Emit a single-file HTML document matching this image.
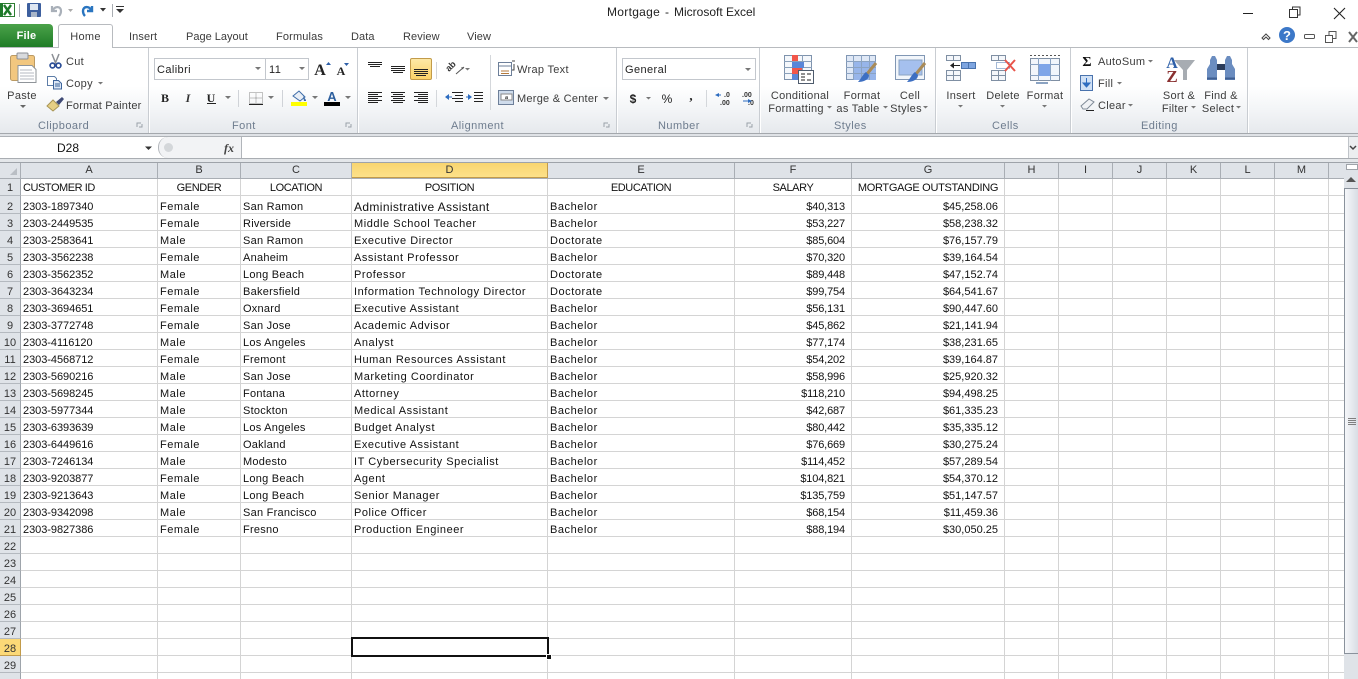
<!DOCTYPE html>
<html><head><meta charset="utf-8"><title>Mortgage - Microsoft Excel</title>
<style>
html,body{margin:0;padding:0;width:1358px;height:679px;overflow:hidden;background:#fff;font-family:"Liberation Sans",sans-serif}
#page{position:absolute;left:0;top:0;width:1358px;height:679px;overflow:hidden;background:#fff}
.a{position:absolute}
.t{position:absolute;white-space:nowrap;font-size:11px;line-height:14px;color:#3c3c3c;letter-spacing:.3px;margin-top:1px}
.c{transform:translateX(-50%)}
.g{color:#6e7c8e}
#rib{position:absolute;left:0;top:48px;width:1358px;height:85px;background:linear-gradient(#fff 0,#fff 45%,#f3f5f7 72%,#e6e9ed 100%)}
.sep{position:absolute;top:48px;height:85px;width:1px;background:#c9cdd2;box-shadow:1px 0 0 #fff}
.box{position:absolute;box-sizing:border-box;border:1px solid #c3c7cd;background:#fff}
table{position:absolute;left:0;top:179px;border-collapse:separate;border-spacing:0;table-layout:fixed;width:1005px}
td{box-sizing:border-box;height:17px;padding:4px 0 0 2px;vertical-align:top;border-right:1px solid #d4d4d4;border-bottom:1px solid #d4d4d4;font-size:11px;line-height:12px;white-space:nowrap;overflow:hidden;color:#111;letter-spacing:.55px}
td:nth-child(4){letter-spacing:.25px}
td:first-child{background:#dfe3e8;border-right:1px solid #9ea4ab;border-bottom:1px solid #b4b9bf;text-align:center;padding-left:0;color:#333;letter-spacing:0}
td.n{letter-spacing:-.05px}
td.m{text-align:right;padding-left:0;padding-right:6px;letter-spacing:-.15px}
td.o{text-align:right;padding-left:0;padding-right:6px;letter-spacing:0}
td.h{text-align:center;padding-left:0}
tr.r1 td{padding-top:3px;letter-spacing:-.4px}
tr.r1 td:first-child{letter-spacing:0}
tr.r2 td{padding-top:5px}
.hd{position:absolute;top:163px;height:15px;box-sizing:border-box;background:#dfe3e8;border-right:1px solid #a9aeb4;text-align:center;font-size:11px;line-height:15px;color:#333}
</style></head><body><div id="page">

<div id="rib"></div>
<div class="a" style="left:0;top:47px;width:1358px;height:1px;background:#b8bbbf"></div>
<div class="a" style="left:0;top:133px;width:1358px;height:1px;background:#a4a8ad"></div>
<div class="a" style="left:0;top:134px;width:1358px;height:3px;background:#dfe2e6"></div>
<div class="a" style="left:0;top:136px;width:1358px;height:1px;background:#aeb2b7"></div>
<div class="a" style="left:0;top:158px;width:1358px;height:1px;background:#a9adb2"></div>
<div class="a" style="left:0;top:159px;width:1358px;height:3px;background:#e4e7ea"></div>
<div class="a" style="left:0;top:162px;width:1358px;height:1px;background:#9ea3a9"></div>

<div class="sep" style="left:148px"></div><div class="sep" style="left:357px"></div><div class="sep" style="left:616px"></div><div class="sep" style="left:759px"></div><div class="sep" style="left:935px"></div><div class="sep" style="left:1070px"></div><div class="sep" style="left:1247px"></div>

<div class="a" style="left:0;top:24px;width:53px;height:23px;border-radius:0 4px 0 0;background:linear-gradient(#4ba24a,#1f7c27);color:#fff;font-size:11px;font-weight:bold;text-align:center;line-height:25px;letter-spacing:.2px">File</div>
<div class="a" style="left:58px;top:24px;width:55px;height:24px;box-sizing:border-box;border:1px solid #b8bbbf;border-bottom:0;border-radius:3px 3px 0 0;background:#fff;color:#3c3c3c;font-size:11px;text-align:center;line-height:24px;letter-spacing:.3px">Home</div>

<div class="t" style="left:129px;top:29px;letter-spacing:.1px">Insert</div>
<div class="t" style="left:186px;top:29px;letter-spacing:0">Page Layout</div>
<div class="t" style="left:276px;top:29px;letter-spacing:.15px">Formulas</div>
<div class="t" style="left:351px;top:29px;letter-spacing:.1px">Data</div>
<div class="t" style="left:403px;top:29px;letter-spacing:.1px">Review</div>
<div class="t" style="left:467px;top:29px;letter-spacing:.1px">View</div>
<div class="t" style="left:607px;top:4px;font-size:12px;color:#222;letter-spacing:.3px">Mortgage</div>
<div class="t" style="left:665px;top:4px;font-size:12px;color:#222">-</div>
<div class="t" style="left:674px;top:4px;font-size:12px;color:#222;letter-spacing:0">Microsoft Excel</div>

<div class="t" style="left:66px;top:54px">Cut</div>
<div class="t" style="left:66px;top:76px">Copy</div>
<div class="t" style="left:66px;top:98px;letter-spacing:.2px">Format Painter</div>
<div class="t c" style="left:22px;top:88px">Paste</div>
<div class="t g" style="left:38px;top:118px;letter-spacing:.45px">Clipboard</div>
<div class="t g" style="left:232px;top:118px;letter-spacing:.45px">Font</div>
<div class="t g" style="left:451px;top:118px;letter-spacing:.45px">Alignment</div>
<div class="t g" style="left:658px;top:118px;letter-spacing:.45px">Number</div>
<div class="t g" style="left:834px;top:118px;letter-spacing:.45px">Styles</div>
<div class="t g" style="left:992px;top:118px;letter-spacing:.45px">Cells</div>
<div class="t g" style="left:1141px;top:118px;letter-spacing:.45px">Editing</div>

<div class="box" style="left:154px;top:58px;width:112px;height:22px"></div>
<div class="box" style="left:265px;top:58px;width:44px;height:22px"></div>
<div class="t" style="left:157px;top:62px;color:#222;letter-spacing:.4px">Calibri</div>
<div class="t" style="left:269px;top:62px;color:#222;letter-spacing:.4px">11</div>

<div class="a" style="left:410px;top:58px;width:22px;height:22px;box-sizing:border-box;border:1px solid #c29b4a;border-radius:2px;background:linear-gradient(#fde9a6,#fbd268)"></div>
<div class="t" style="left:517px;top:62px;letter-spacing:.3px">Wrap Text</div>
<div class="t" style="left:517px;top:91px;letter-spacing:.25px">Merge &amp; Center</div>
<div class="box" style="left:622px;top:58px;width:134px;height:22px"></div>
<div class="t" style="left:625px;top:62px;color:#222;letter-spacing:.4px">General</div>

<div class="t c" style="left:800px;top:88px">Conditional</div>
<div class="t c" style="left:796px;top:101px">Formatting</div>
<div class="t c" style="left:862px;top:88px">Format</div>
<div class="t c" style="left:858px;top:101px">as Table</div>
<div class="t c" style="left:910px;top:88px">Cell</div>
<div class="t c" style="left:906px;top:101px">Styles</div>
<div class="t c" style="left:961px;top:88px">Insert</div>
<div class="t c" style="left:1003px;top:88px">Delete</div>
<div class="t c" style="left:1045px;top:88px">Format</div>
<div class="t" style="left:1098px;top:54px">AutoSum</div>
<div class="t" style="left:1098px;top:76px">Fill</div>
<div class="t" style="left:1098px;top:98px">Clear</div>
<div class="t c" style="left:1179px;top:88px">Sort &amp;</div>
<div class="t c" style="left:1175px;top:101px">Filter</div>
<div class="t c" style="left:1221px;top:88px">Find &amp;</div>
<div class="t c" style="left:1218px;top:101px">Select</div>

<div class="t" style="left:57px;top:140px;font-size:12px;color:#111;letter-spacing:0">D28</div>
<div class="a" style="left:158px;top:137px;width:84px;height:21px;box-sizing:border-box;border:1px solid #b1b5ba;border-width:0 1px 0 1px;border-radius:10px 0 0 10px;background:#f2f3f5"></div>
<div class="a" style="left:164px;top:143px;width:9px;height:9px;border-radius:50%;background:#d4d7da"></div>
<div class="t" style="left:224px;top:140px;font-family:'Liberation Serif',serif;font-style:italic;font-weight:bold;font-size:12px;color:#444;letter-spacing:0">fx</div>
<div class="a" style="left:1348px;top:137px;width:10px;height:21px;background:#eceef0;border-left:1px solid #c0c4c9"></div>

<svg class="a" style="left:0;top:0" width="1358" height="136" viewBox="0 0 1358 136">
<!-- QAT -->
<rect x="0.5" y="3.5" width="14" height="13" fill="#fff" stroke="#2d7d32"/><path d="M4 5l7 10M11 5l-7 10" stroke="#1f7a2a" stroke-width="2.400"/><rect x="0" y="3" width="3" height="14" fill="#1f7a2a"/>
<path d="M19.500 4v13M112.500 4v13" stroke="#a9adb2"/>
<rect x="27" y="3" width="14" height="14" rx="1" fill="#3d5f9e"/><rect x="30" y="4" width="8" height="6" fill="#dfe7f2"/><rect x="31" y="12" width="6" height="5" fill="#a8b5c8"/>
<path d="M52 6v5h5M53 10c2-4 8-4 8 1 0 2-1 4-2 5" fill="none" stroke="#a9b0b9" stroke-width="2.200"/>
<path d="M68 9h5l-2.500 3z" fill="#aaa"/>
<path d="M92 6v5h-5M91 10c-2-4-8-4-8 1 0 2 1 4 2 5" fill="none" stroke="#2a75c0" stroke-width="2.400"/>
<path d="M100 8h6l-3 3.500z" fill="#333"/>
<path d="M116 6h8v1h-8zM116 9h8l-4 4z" fill="#333"/>
<!-- window -->
<path d="M1243 13.500h10" stroke="#222"/><path d="M1289.500 9.500h8v8h-8zM1292.500 9.500v-2.500h7.500v8h-2.500" fill="#fff" stroke="#333"/><path d="M1334 8l11 11M1345 8l-11 11" stroke="#222" stroke-width="1.100"/>
<path d="M1262 38l4-4 4 4-1.500 1.500-2.500-2.500-2.500 2.500z" fill="#fff" stroke="#444"/>
<circle cx="1287" cy="35" r="8" fill="#3c78c8"/><text x="1287" y="40" font-family="Liberation Sans" font-size="13" font-weight="bold" fill="#fff" text-anchor="middle">?</text>
<rect x="1304.500" y="34.500" width="10" height="4" rx="1" fill="#fff" stroke="#555"/>
<path d="M1325.500 35.500h7v7h-7zM1329 35v-3.500h7v7h-3" fill="#fff" stroke="#555"/>
<path d="M1349 32l8 10M1357 32l-8 10" stroke="#666" stroke-width="2"/>
<!-- paste -->
<rect x="10.500" y="55.500" width="24" height="25" rx="2" fill="#f2c77f" stroke="#bb9a63"/><rect x="17" y="53" width="11" height="6" rx="1" fill="#d8dadd" stroke="#8b8f95"/>
<path d="M18 65.500h14l4 4v13h-18z" fill="#fff" stroke="#8f9499"/><path d="M20 70h12M20 73h14M20 76h14M20 79h14" stroke="#b4bac2"/>
<path d="M20 105h6l-3 3z" fill="#666"/>
<!-- cut / copy / painter -->
<path d="M52 54l4 10M59 54l-4 10" stroke="#8b8f95" stroke-width="1.500"/><circle cx="52.500" cy="65.500" r="2.400" fill="none" stroke="#2d4f97" stroke-width="1.700"/><circle cx="58.500" cy="65.500" r="2.400" fill="none" stroke="#2d4f97" stroke-width="1.700"/>
<path d="M47.500 76.500h7l2 2v7h-9z" fill="#fff" stroke="#5e7ea8"/><path d="M53.500 80.500h5l3 3v5.500h-8z" fill="#dbe6f5" stroke="#3e659b"/><path d="M55 84h5M55 86h5" stroke="#3e659b"/>
<path d="M98 82h5l-2.500 2.500z" fill="#777"/>
<path d="M47 106l6-6 6 6-6 5z" fill="#e6cf84" stroke="#a89555"/><path d="M56 102l6-5 2 2-5 6z" fill="#3f4a75"/>
<!-- font -->
<path d="M255 67h6l-3 3zM299 67h6l-3 3z" fill="#777"/>
<text x="320" y="75" font-family="Liberation Serif" font-size="16" font-weight="bold" fill="#222" text-anchor="middle">A</text><path d="M326 65h5l-2.500-3z" fill="#2d5fa8"/>
<text x="341" y="75" font-family="Liberation Serif" font-size="12" font-weight="bold" fill="#222" text-anchor="middle">A</text><path d="M344 63h5l-2.500 3z" fill="#2d5fa8"/>
<text x="165" y="102" font-family="Liberation Serif" font-size="12" font-weight="bold" fill="#222" text-anchor="middle">B</text>
<text x="188" y="102" font-family="Liberation Serif" font-size="12" font-style="italic" font-weight="bold" fill="#333" text-anchor="middle">I</text>
<text x="211" y="102" font-family="Liberation Serif" font-size="12" font-weight="bold" fill="#222" text-anchor="middle">U</text><path d="M207 103.500h9" stroke="#222"/>
<path d="M225 96h6l-3 3zM268 96h6l-3 3zM312 96h6l-3 3zM345 96h6l-3 3z" fill="#777"/>
<path d="M238.500 90v17" stroke="#d0d3d8"/><path d="M282.500 90v17" stroke="#d0d3d8"/>
<path d="M249.500 92.500h13v11h-13zM256 92.500v11M249.500 98h13" fill="none" stroke="#888" stroke-dasharray="1 1"/><path d="M249 104.500h14" stroke="#222"/>
<path d="M293 96l6-5 6 6-5 4z" fill="#e8eef6" stroke="#3d6ca8"/><path d="M303 96l3 4v1h-2z" fill="#3d6ca8"/><rect x="291" y="102" width="16" height="4" fill="#ffff00"/>
<text x="332" y="101" font-family="Liberation Sans" font-size="13" font-weight="bold" fill="#2d5f9e" text-anchor="middle">A</text><rect x="324" y="102" width="16" height="4" fill="#000"/>
<!-- alignment -->
<g stroke="#222">
<path d="M368 62.500h14M368 64.500h14M370 66.500h10"/>
<path d="M391 66.500h14M391 68.500h14M391 70.500h14M393 72.500h10"/>
<path d="M414 69.500h14M414 71.500h14M414 73.500h14M416 75.500h10"/>
<path d="M368 92.500h14M368 94.500h10M368 96.500h14M368 98.500h10M368 100.500h14M368 102.500h10"/>
<path d="M391 92.500h14M393 94.500h10M391 96.500h14M393 98.500h10M391 100.500h14M393 102.500h10"/>
<path d="M414 92.500h14M418 94.500h10M414 96.500h14M418 98.500h10M414 100.500h14M418 102.500h10"/>
<path d="M452 92.500h11M455 95.500h8M452 98.500h11M455 101.500h8"/>
<path d="M474 92.500h9M474 95.500h9M474 98.500h9M474 101.500h9"/>
</g>
<text x="0" y="0" transform="translate(449 72) rotate(-45)" font-family="Liberation Sans" font-size="9" font-weight="bold" fill="#333">ab</text>
<path d="M456 74l8-7" stroke="#555"/><path d="M464 67l-3 .5 2 2z" fill="#555"/>
<path d="M445 97l4-3v6zM472 97l-4-3v6z" fill="#2d6cc0"/><path d="M449 97h3M468 97h-2" stroke="#2d6cc0"/>
<path d="M465 68h5l-2.500 2.500z" fill="#777"/>
<path d="M436.500 62v17M436.500 90v17M490.500 55v55" stroke="#d4d7db"/>
<rect x="498.500" y="62.500" width="13" height="13" fill="#fff" stroke="#6d7f99"/><path d="M499 66h12" stroke="#6d7f99"/><path d="M501 71h8M501 73.500h8" stroke="#b57a3c"/><path d="M512 61h3M514 64v6h-2" stroke="#444" fill="none"/>
<rect x="498.500" y="90.500" width="15" height="14" fill="#cfdcec" stroke="#6d7f99"/><rect x="501" y="94" width="11" height="6" fill="#fff" stroke="#888"/><text x="506.500" y="99" font-family="Liberation Serif" font-size="6" font-weight="bold" fill="#222" text-anchor="middle">a</text>
<path d="M603 97h6l-3 3zM745 68h6l-3 3zM646 97h5l-2.500 2.500z" fill="#777"/>
<!-- number -->
<text x="633" y="103" font-family="Liberation Sans" font-size="12" font-weight="bold" fill="#222" text-anchor="middle">$</text>
<text x="667" y="103" font-family="Liberation Sans" font-size="12" fill="#222" text-anchor="middle">%</text>
<text x="691" y="100" font-family="Liberation Serif" font-size="13" font-weight="bold" fill="#222" text-anchor="middle">,</text>
<path d="M706.500 90v17" stroke="#d4d7db"/>
<text x="724" y="97" font-family="Liberation Sans" font-size="7" font-weight="bold" fill="#333">.0</text><text x="720" y="105" font-family="Liberation Sans" font-size="7" font-weight="bold" fill="#333">.00</text>
<text x="742" y="97" font-family="Liberation Sans" font-size="7" font-weight="bold" fill="#333">.00</text><text x="748" y="105" font-family="Liberation Sans" font-size="7" font-weight="bold" fill="#333">.0</text>
<path d="M715 95l4-2v4zM752 101l-4-2v4z" fill="#2d6cc0"/><path d="M717 95h4M743 101h6" stroke="#2d6cc0"/>
<!-- cond fmt -->
<rect x="784.500" y="55.500" width="27" height="24" fill="#f4f7fb" stroke="#7f93ad"/><path d="M793.500 55v24M802.500 55v24M784 61.500h28M784 67.500h28M784 73.500h28" stroke="#8aa0ba"/>
<rect x="792" y="55" width="6" height="6" fill="#f1564a"/><rect x="792" y="62" width="12" height="6" fill="#5a86d8"/><rect x="792" y="68" width="10" height="6" fill="#f1564a"/><rect x="792" y="74" width="7" height="6" fill="#5a86d8"/>
<rect x="798.500" y="70.500" width="15" height="13" fill="#fff" stroke="#4e5b6c"/><path d="M801 74h4M801 77h4M801 80h4M807 74h4M807 80h4" stroke="#222"/>
<!-- fmt table -->
<rect x="846.500" y="55.500" width="29" height="24" fill="#dfe8f6" stroke="#8197b4"/><rect x="853" y="61" width="23" height="19" fill="#97b5ea"/><path d="M853.500 55v25M861.500 55v25M869.500 55v25M846 61.500h30M846 67.500h30M846 73.500h30" stroke="#8ba3c2"/>
<path d="M876 63l-9 11" stroke="#a98b58" stroke-width="3"/><path d="M866 72c-3 2-5 7-8 10 5 0 11-2 11-7z" fill="#3d6fc2"/>
<!-- cell styles -->
<rect x="895.500" y="55.500" width="29" height="24" fill="#f2f6fb" stroke="#8197b4"/><rect x="899" y="60" width="23" height="15" fill="#a5c0ee" stroke="#8ba3c2"/>
<path d="M925 63l-9 11" stroke="#a98b58" stroke-width="3"/><path d="M915 72c-3 2-5 7-8 10 5 0 11-2 11-7z" fill="#3d6fc2"/>
<!-- insert -->
<g fill="#f4f7fb" stroke="#7f8fa3"><path d="M946.500 55.500h7v5h-7zM953.500 55.500h7v5h-7zM946.500 70.500h7v5h-7zM953.500 70.500h7v5h-7zM946.500 75.500h7v5h-7zM953.500 75.500h7v5h-7z"/></g>
<path d="M961.500 62.500h7v6h-7zM968.500 62.500h7v6h-7z" fill="#7ea5e0" stroke="#4a73ad"/><path d="M952 65.500h8" stroke="#222"/><path d="M950 65.500l4-3v6z" fill="#222"/>
<!-- delete -->
<g fill="#f4f7fb" stroke="#7f8fa3"><path d="M991.500 55.500h7v5h-7zM998.500 55.500h7v5h-7zM991.500 70.500h7v5h-7zM998.500 70.500h7v5h-7zM991.500 75.500h7v5h-7zM998.500 75.500h7v5h-7z"/></g>
<path d="M996.500 62.500h13v6h-13z" fill="#fff" stroke="#4a73ad" stroke-dasharray="1 1"/><path d="M1005 60l10 11M1015 60l-10 11" stroke="#e8544a" stroke-width="2"/>
<!-- format -->
<rect x="1030.500" y="58.500" width="29" height="22" fill="#f2f6fb" stroke="#7f8fa3"/><path d="M1038.500 58v23M1050.500 58v23M1030 64.500h30M1030 75.500h30" stroke="#8ba3c2"/><rect x="1039" y="64" width="11" height="12" fill="#7ea5e8"/>
<path d="M1030 55.500h30" stroke="#555" stroke-dasharray="2 2"/><path d="M1036 83h12" stroke="#8ba3c2" stroke-width="2"/>
<path d="M827 106h5l-2.500 2.500zM883 106h5l-2.500 2.500zM923 106h5l-2.500 2.500zM958 105h5l-2.500 2.500zM1000 105h5l-2.500 2.500zM1042 105h5l-2.500 2.500zM1148 60h5l-2.500 2.500zM1117 82h5l-2.500 2.500zM1128 104h5l-2.500 2.500zM1191 106h5l-2.500 2.500zM1236 106h5l-2.500 2.500z" fill="#777"/>
<!-- editing -->
<text x="1087" y="66" font-family="Liberation Serif" font-size="14" font-weight="bold" fill="#111" text-anchor="middle">Σ</text>
<rect x="1080.500" y="75.500" width="12" height="15" fill="#cfe0f5" stroke="#4a73ad"/><path d="M1086.500 78v6M1083 83h7l-3.500 4z" fill="#2d6cc0" stroke="#2d6cc0"/>
<path d="M1081 106l8-7 5 3-7 7h-4z" fill="#f0f2f5" stroke="#7f8a97"/><path d="M1086 110.500h8" stroke="#222"/>
<path d="M1174 60h21l-8 10v10h-4v-10z" fill="#a7acb2"/>
<text x="1172" y="68" font-family="Liberation Serif" font-size="16" font-weight="bold" fill="#2d5fa8" text-anchor="middle">A</text>
<text x="1172" y="82" font-family="Liberation Serif" font-size="17" font-weight="bold" fill="#8a3030" text-anchor="middle">Z</text>
<path d="M1207 80v-11l3-5v-4l2-4h3l2 4v20zM1235 80v-11l-3-5v-4l-2-4h-3l-2 4v20z" fill="#6b8dc0"/><rect x="1217" y="64" width="8" height="6" fill="#2b3c5a"/><path d="M1207 78.500h10M1225 78.500h10" stroke="#3f5f92" stroke-width="2"/>
<!-- launchers -->
<g fill="none" stroke="#9aa1a9"><path d="M137 127v-4h4M139 127h3v-3"/><path d="M346 127v-4h4M348 127h3v-3"/><path d="M604 127v-4h4M606 127h3v-3"/><path d="M747 127v-4h4M749 127h3v-3"/></g>
</svg>

<svg class="a" style="left:0;top:137px" width="1358" height="22" viewBox="0 0 1358 22">
<path d="M145 9.500h7l-3.500 3.500z" fill="#333"/>
<path d="M1350 9l3 3 3-3" fill="none" stroke="#444" stroke-width="1.500"/>
</svg>

<div class="hd" style="left:0;width:21px"></div>
<svg class="a" style="left:9px;top:167px" width="9" height="9"><path d="M8 1v7h-7z" fill="#b9bec4"/></svg>
<div class="hd" style="left:21px;width:137px">A</div>
<div class="hd" style="left:158px;width:83px">B</div>
<div class="hd" style="left:241px;width:111px">C</div>
<div class="hd" style="left:352px;width:196px;background:linear-gradient(#f8d56f,#fde18a);border-right:1px solid #c29b4a;border-bottom:1px solid #c29b4a">D</div>
<div class="hd" style="left:548px;width:187px">E</div>
<div class="hd" style="left:735px;width:117px">F</div>
<div class="hd" style="left:852px;width:153px">G</div>
<div class="hd" style="left:1005px;width:54px">H</div>
<div class="hd" style="left:1059px;width:54px">I</div>
<div class="hd" style="left:1113px;width:54px">J</div>
<div class="hd" style="left:1167px;width:54px">K</div>
<div class="hd" style="left:1221px;width:54px">L</div>
<div class="hd" style="left:1275px;width:54px">M</div>
<div class="hd" style="left:1329px;width:15px;border:0"></div>
<div class="a" style="left:0;top:178px;width:1344px;height:1px;background:#a9aeb4"></div>

<div class="a" style="left:1005px;top:179px;width:339px;height:500px;background:linear-gradient(90deg,transparent 53px,#d4d4d4 53px,#d4d4d4 54px) 0 0/54px 100% repeat-x"></div>
<div class="a" style="left:1005px;top:195px;width:339px;height:1px;background:#d4d4d4"></div>
<div class="a" style="left:1005px;top:213px;width:339px;height:1px;background:#d4d4d4"></div>
<div class="a" style="left:1005px;top:214px;width:339px;height:465px;background:linear-gradient(transparent 16px,#d4d4d4 16px,#d4d4d4 17px) 0 0/100% 17px repeat-y"></div>

<table>
<colgroup><col style="width:21px"><col style="width:137px"><col style="width:83px"><col style="width:111px"><col style="width:196px"><col style="width:187px"><col style="width:117px"><col style="width:153px"></colgroup>
<tr class="r1"><td>1</td><td style="letter-spacing:-.45px">CUSTOMER ID</td><td class="h">GENDER</td><td class="h">LOCATION</td><td class="h">POSITION</td><td class="h">EDUCATION</td><td class="h">SALARY</td><td class="h" style="letter-spacing:-.3px">MORTGAGE OUTSTANDING</td></tr>
<tr class="r2"><td style="height:18px">2</td><td class="n">2303-1897340</td><td>Female</td><td>San Ramon</td><td style="font-size:12px;letter-spacing:.37px">Administrative Assistant</td><td>Bachelor</td><td class="m">$40,313</td><td class="o">$45,258.06</td></tr>
<tr><td>3</td><td class="n">2303-2449535</td><td>Female</td><td>Riverside</td><td>Middle School Teacher</td><td>Bachelor</td><td class="m">$53,227</td><td class="o">$58,238.32</td></tr>
<tr><td>4</td><td class="n">2303-2583641</td><td>Male</td><td>San Ramon</td><td>Executive Director</td><td>Doctorate</td><td class="m">$85,604</td><td class="o">$76,157.79</td></tr>
<tr><td>5</td><td class="n">2303-3562238</td><td>Female</td><td>Anaheim</td><td>Assistant Professor</td><td>Bachelor</td><td class="m">$70,320</td><td class="o">$39,164.54</td></tr>
<tr><td>6</td><td class="n">2303-3562352</td><td>Male</td><td>Long Beach</td><td>Professor</td><td>Doctorate</td><td class="m">$89,448</td><td class="o">$47,152.74</td></tr>
<tr><td>7</td><td class="n">2303-3643234</td><td>Female</td><td>Bakersfield</td><td>Information Technology Director</td><td>Doctorate</td><td class="m">$99,754</td><td class="o">$64,541.67</td></tr>
<tr><td>8</td><td class="n">2303-3694651</td><td>Female</td><td>Oxnard</td><td>Executive Assistant</td><td>Bachelor</td><td class="m">$56,131</td><td class="o">$90,447.60</td></tr>
<tr><td>9</td><td class="n">2303-3772748</td><td>Female</td><td>San Jose</td><td>Academic Advisor</td><td>Bachelor</td><td class="m">$45,862</td><td class="o">$21,141.94</td></tr>
<tr><td>10</td><td class="n">2303-4116120</td><td>Male</td><td>Los Angeles</td><td>Analyst</td><td>Bachelor</td><td class="m">$77,174</td><td class="o">$38,231.65</td></tr>
<tr><td>11</td><td class="n">2303-4568712</td><td>Female</td><td>Fremont</td><td>Human Resources Assistant</td><td>Bachelor</td><td class="m">$54,202</td><td class="o">$39,164.87</td></tr>
<tr><td>12</td><td class="n">2303-5690216</td><td>Male</td><td>San Jose</td><td>Marketing Coordinator</td><td>Bachelor</td><td class="m">$58,996</td><td class="o">$25,920.32</td></tr>
<tr><td>13</td><td class="n">2303-5698245</td><td>Male</td><td>Fontana</td><td>Attorney</td><td>Bachelor</td><td class="m">$118,210</td><td class="o">$94,498.25</td></tr>
<tr><td>14</td><td class="n">2303-5977344</td><td>Male</td><td>Stockton</td><td>Medical Assistant</td><td>Bachelor</td><td class="m">$42,687</td><td class="o">$61,335.23</td></tr>
<tr><td>15</td><td class="n">2303-6393639</td><td>Male</td><td>Los Angeles</td><td>Budget Analyst</td><td>Bachelor</td><td class="m">$80,442</td><td class="o">$35,335.12</td></tr>
<tr><td>16</td><td class="n">2303-6449616</td><td>Female</td><td>Oakland</td><td>Executive Assistant</td><td>Bachelor</td><td class="m">$76,669</td><td class="o">$30,275.24</td></tr>
<tr><td>17</td><td class="n">2303-7246134</td><td>Male</td><td>Modesto</td><td>IT Cybersecurity Specialist</td><td>Bachelor</td><td class="m">$114,452</td><td class="o">$57,289.54</td></tr>
<tr><td>18</td><td class="n">2303-9203877</td><td>Female</td><td>Long Beach</td><td>Agent</td><td>Bachelor</td><td class="m">$104,821</td><td class="o">$54,370.12</td></tr>
<tr><td>19</td><td class="n">2303-9213643</td><td>Male</td><td>Long Beach</td><td>Senior Manager</td><td>Bachelor</td><td class="m">$135,759</td><td class="o">$51,147.57</td></tr>
<tr><td>20</td><td class="n">2303-9342098</td><td>Male</td><td>San Francisco</td><td>Police Officer</td><td>Bachelor</td><td class="m">$68,154</td><td class="o">$11,459.36</td></tr>
<tr><td>21</td><td class="n">2303-9827386</td><td>Female</td><td>Fresno</td><td>Production Engineer</td><td>Bachelor</td><td class="m">$88,194</td><td class="o">$30,050.25</td></tr>
<tr><td>22</td><td></td><td></td><td></td><td></td><td></td><td></td><td></td></tr>
<tr><td>23</td><td></td><td></td><td></td><td></td><td></td><td></td><td></td></tr>
<tr><td>24</td><td></td><td></td><td></td><td></td><td></td><td></td><td></td></tr>
<tr><td>25</td><td></td><td></td><td></td><td></td><td></td><td></td><td></td></tr>
<tr><td>26</td><td></td><td></td><td></td><td></td><td></td><td></td><td></td></tr>
<tr><td>27</td><td></td><td></td><td></td><td></td><td></td><td></td><td></td></tr>
<tr><td style="background:#fcd977;border-bottom:1px solid #c29b4a;border-right:1px solid #c29b4a">28</td><td></td><td></td><td></td><td></td><td></td><td></td><td></td></tr>
<tr><td>29</td><td></td><td></td><td></td><td></td><td></td><td></td><td></td></tr>
<tr><td></td><td></td><td></td><td></td><td></td><td></td><td></td><td></td></tr>
</table>

<div class="a" style="left:351px;top:637px;width:198px;height:20px;box-sizing:border-box;border:2px solid #111"></div>
<div class="a" style="left:546px;top:654px;width:4px;height:4px;background:#111;border:1px solid #fff"></div>

<div class="a" style="left:1344px;top:163px;width:14px;height:516px;background:#dfe3e8"></div>
<div class="a" style="left:1346px;top:164px;width:12px;height:6px;box-sizing:border-box;background:#fff;border:1px solid #9ea3a9"></div>
<svg class="a" style="left:1344px;top:172px" width="14" height="16"><path d="M2 10l5-5 5 5z" fill="#555"/></svg>
<div class="a" style="left:1344px;top:188px;width:14px;height:466px;box-sizing:border-box;border-left:1px solid #8a929c;border-top:1px solid #8a929c;border-bottom:1px solid #8a929c;background:linear-gradient(90deg,#f5f7fa,#d9dde4)"></div>
<div class="a" style="left:1348px;top:418px;width:8px;height:7px;background:repeating-linear-gradient(#7f7f7f 0,#7f7f7f 1px,transparent 1px,transparent 2px)"></div>
</div></body></html>
